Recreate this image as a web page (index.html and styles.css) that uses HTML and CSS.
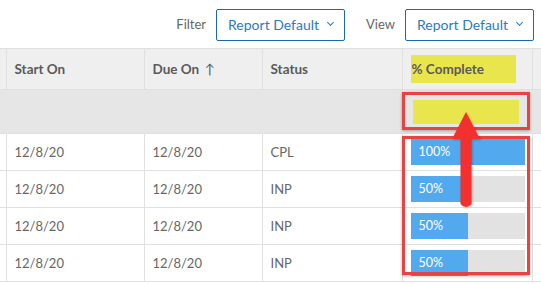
FILE: index.html
```html
<!DOCTYPE html>
<html lang="en">
<head>
    <meta charset="UTF-8">
    <meta name="viewport" content="width=device-width, initial-scale=1.0">
    <link rel="stylesheet" href="styles.css">
    <title>Report</title>
</head>
<body>
    <div class="toolbar">
        <span class="toolbar-label">Filter</span>
        <button class="select-button">Report Default <span class="chevron"></span></button>
        <span class="toolbar-label view-label">View</span>
        <button class="select-button">Report Default <span class="chevron"></span></button>
    </div>
    <div class="grid-wrap">
        <table class="report-grid">
            <colgroup>
                <col class="col-edge">
                <col class="col-start">
                <col class="col-due">
                <col class="col-status">
                <col class="col-complete">
                <col class="col-rest">
            </colgroup>
            <tr class="head-row">
                <th></th>
                <th>Start On</th>
                <th>Due On <span class="sort-arrow">&#8593;</span></th>
                <th>Status</th>
                <th><span class="marker">% Complete</span></th>
                <th></th>
            </tr>
            <tr class="group-row">
                <td></td>
                <td></td>
                <td></td>
                <td></td>
                <td><div class="marker-block"></div></td>
                <td></td>
            </tr>
            <tr>
                <td></td>
                <td>12/8/20</td>
                <td>12/8/20</td>
                <td>CPL</td>
                <td><div class="progress"><div class="progress-fill" style="width: 100%">100%</div></div></td>
                <td></td>
            </tr>
            <tr>
                <td></td>
                <td>12/8/20</td>
                <td>12/8/20</td>
                <td>INP</td>
                <td><div class="progress"><div class="progress-fill" style="width: 50%">50%</div></div></td>
                <td></td>
            </tr>
            <tr>
                <td></td>
                <td>12/8/20</td>
                <td>12/8/20</td>
                <td>INP</td>
                <td><div class="progress"><div class="progress-fill" style="width: 50%">50%</div></div></td>
                <td></td>
            </tr>
            <tr>
                <td></td>
                <td>12/8/20</td>
                <td>12/8/20</td>
                <td>INP</td>
                <td><div class="progress"><div class="progress-fill" style="width: 50%">50%</div></div></td>
                <td></td>
            </tr>
        </table>

        <!-- annotation overlay -->
        <div class="callout callout-top"></div>
        <div class="callout callout-bottom"></div>
        <svg class="callout-arrow" width="40" height="100" viewBox="0 0 40 100">
            <path d="M20 1 L34 28 L25.5 28 L25.5 93 Q20 99 14.5 93 L14.5 28 L6 28 Z" fill="#f2302e"/>
        </svg>
    </div>
</body>
</html>
```

FILE: styles.css
```css
body {
    margin: 0;
    padding: 0;
    background-color: #fff;
    font-family: Lato, "Open Sans", sans-serif;
    overflow: hidden;
}

.toolbar {
    display: flex;
    align-items: center;
    justify-content: flex-end;
    height: 48px;
    padding-right: 7px;
    box-sizing: border-box;
}

.toolbar-label {
    font-size: 13px;
    color: #666;
    margin-right: 10px;
}

.view-label {
    margin-left: 21px;
}

.select-button {
    display: flex;
    align-items: center;
    justify-content: center;
    gap: 9px;
    width: 129px;
    height: 32px;
    margin-top: 1px;
    padding: 0;
    background-color: #fff;
    border: 1px solid #1f6aa5;
    border-radius: 2px;
    color: #2b7bc0;
    font-family: inherit;
    font-size: 14px;
}

.chevron {
    width: 4px;
    height: 4px;
    border-right: 1px solid #2b7bc0;
    border-bottom: 1px solid #2b7bc0;
    transform: rotate(45deg);
    margin-top: -4px;
}

.grid-wrap {
    position: relative;
}

.report-grid {
    border-collapse: collapse;
    table-layout: fixed;
    width: 550px;
}

.col-edge { width: 6px; }
.col-start { width: 138px; }
.col-due { width: 118px; }
.col-status { width: 140px; }
.col-complete { width: 130px; }
.col-rest { width: 18px; }

th, td {
    border: 1px solid #e0e0e0;
    padding: 0 8px;
    text-align: left;
    font-size: 13px;
    white-space: nowrap;
    overflow: hidden;
}

th:first-child, td:first-child {
    border-left: none;
    padding: 0;
}

th {
    height: 40px;
    background-color: #efefef;
    color: #5a5a5a;
    font-weight: 700;
    font-size: 13.5px;
}

.sort-arrow {
    font-weight: 400;
    margin-left: 2px;
}

.marker {
    display: inline-block;
    background-color: #e9e54c;
    padding: 6px 32px 6px 1px;
    margin-left: 0;
}

.group-row td {
    height: 43px;
    background-color: #e6e6e7;
    border-left-color: #e6e6e7;
    border-right-color: #e6e6e7;
}

.marker-block {
    height: 24px;
    width: 106px;
    margin-left: 2px;
    background-color: #e9e54c;
}

td {
    height: 36px;
    color: #666;
}

.progress {
    height: 26px;
    width: 114px;
    background-color: #e2e2e2;
}

.progress-fill {
    height: 100%;
    background-color: #52a9ee;
    color: #fff;
    font-size: 12.5px;
    line-height: 26px;
    padding-left: 8px;
    box-sizing: border-box;
}

.callout {
    position: absolute;
    border: 3px solid #e84343;
    box-shadow: 0 1px 3px rgba(0, 0, 0, 0.3);
}

.callout-top {
    left: 402px;
    top: 44px;
    width: 122px;
    height: 32px;
}

.callout-bottom {
    left: 402px;
    top: 88px;
    width: 122px;
    height: 133px;
}

.callout-arrow {
    position: absolute;
    left: 446px;
    top: 63px;
    filter: drop-shadow(1px 1px 1px rgba(0, 0, 0, 0.25));
}
```
